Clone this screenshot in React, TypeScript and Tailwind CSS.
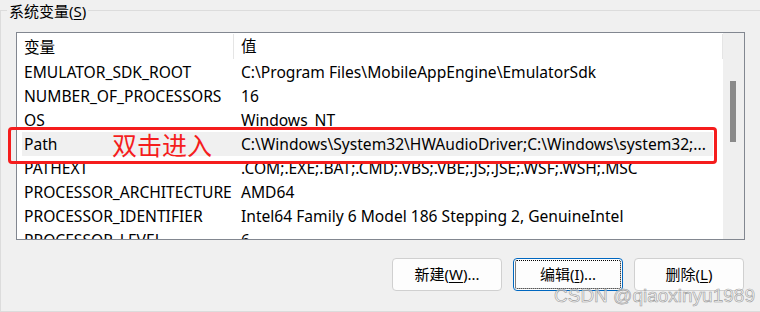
import React from "react";

const rows: [string, string][] = [
  ["EMULATOR_SDK_ROOT", "C:\\Program Files\\MobileAppEngine\\EmulatorSdk"],
  ["NUMBER_OF_PROCESSORS", "16"],
  ["OS", "Windows_NT"],
  ["Path", "C:\\Windows\\System32\\HWAudioDriver;C:\\Windows\\system32;..."],
  ["PATHEXT", ".COM;.EXE;.BAT;.CMD;.VBS;.VBE;.JS;.JSE;.WSF;.WSH;.MSC"],
  ["PROCESSOR_ARCHITECTURE", "AMD64"],
  ["PROCESSOR_IDENTIFIER", "Intel64 Family 6 Model 186 Stepping 2, GenuineIntel"],
  ["PROCESSOR_LEVEL", "6"],
];

const font = "font-['Noto_Sans','Noto_Sans_CJK_SC',sans-serif]";

export default function App() {
  return (
    <div className={`relative w-[760px] h-[312px] overflow-hidden bg-[#f0f0f0] text-black ${font}`}>
      <div className="relative mt-[10px] w-[800px] h-[302px] border border-[#dcdcdc] pt-[21px] pl-[15px]">
        <div className="absolute left-[6px] top-[-10px] bg-[#f0f0f0] px-[2px] text-[15px] leading-[20px]">
          系统变量(<span className="underline underline-offset-2">S</span>)
        </div>
        {/* list box */}
        <div className="flex w-[729px] h-[208px] border border-[#828790] bg-white overflow-hidden">
          <div className="flex-1 flex flex-col text-[15.6px]">
            <div className="flex h-[27px] shrink-0 items-center">
              <div className="w-[217px] pl-[7px] pt-[1px] border-r border-[#e5e5e5] h-[25px] leading-[25px] self-start mt-[1px]">变量</div>
              <div className="flex-1 pl-[7px] h-[25px] leading-[25px] self-start mt-[1px] border-r border-[#e5e5e5]">值</div>
            </div>
            {rows.map(([k, v]) => (
              <div
                key={k}
                className={`flex h-[24px] shrink-0 items-center leading-[24px] whitespace-nowrap ${
                  k === "Path" ? "bg-[#f0f0f0] ml-[5px] mr-[10px]" : ""
                }`}
              >
                <div className={k === "Path" ? "w-[212px] pl-[2px]" : "w-[217px] pl-[7px]"}>{k}</div>
                <div className="flex-1 pl-[7px]">{v}</div>
              </div>
            ))}
          </div>
          <div className="w-[21px] shrink-0 bg-[#efefef] pt-[48px] pl-[7px]">
            <div className="w-[6px] h-[61px] bg-[#8a8a8a]" />
          </div>
        </div>
        {/* buttons */}
        <div className="flex w-[729px] justify-end gap-[11px] mt-[18px] pr-[1px] text-[15px]">
          <button className="w-[110px] h-[33px] rounded-[4px] border border-[#d0d0d0] bg-[#fdfdfd]">
            新建(<span className="underline underline-offset-2">W</span>)...
          </button>
          <button className="w-[110px] h-[33px] rounded-[4px] border border-[#0067c0] bg-[#fdfdfd] outline-1 outline-dotted outline-black outline-offset-[-3px]">
            编辑(<span className="underline underline-offset-2">I</span>)...
          </button>
          <button className="w-[110px] h-[33px] rounded-[4px] border border-[#d0d0d0] bg-[#fdfdfd]">
            删除(<span className="underline underline-offset-2">L</span>)
          </button>
        </div>
      </div>

      {/* annotation */}
      <div className="absolute left-[8px] top-[127px] w-[709px] h-[37px] border-[3px] border-[#f51d1d] rounded-[4px]" />
      <div className="absolute left-[112px] top-[128px] text-[25px] leading-[32px] text-[#f51d1d] font-['Noto_Sans_CJK_SC',sans-serif]">
        双击进入
      </div>

      {/* watermark */}
      <div className="absolute left-[554px] top-[284px] text-[19px] leading-[24px] font-['Liberation_Sans',sans-serif] text-[rgba(255,255,255,0.55)] [-webkit-text-stroke:0.6px_#9a9a9a]">
        CSDN @qiaoxinyu1989
      </div>
    </div>
  );
}
